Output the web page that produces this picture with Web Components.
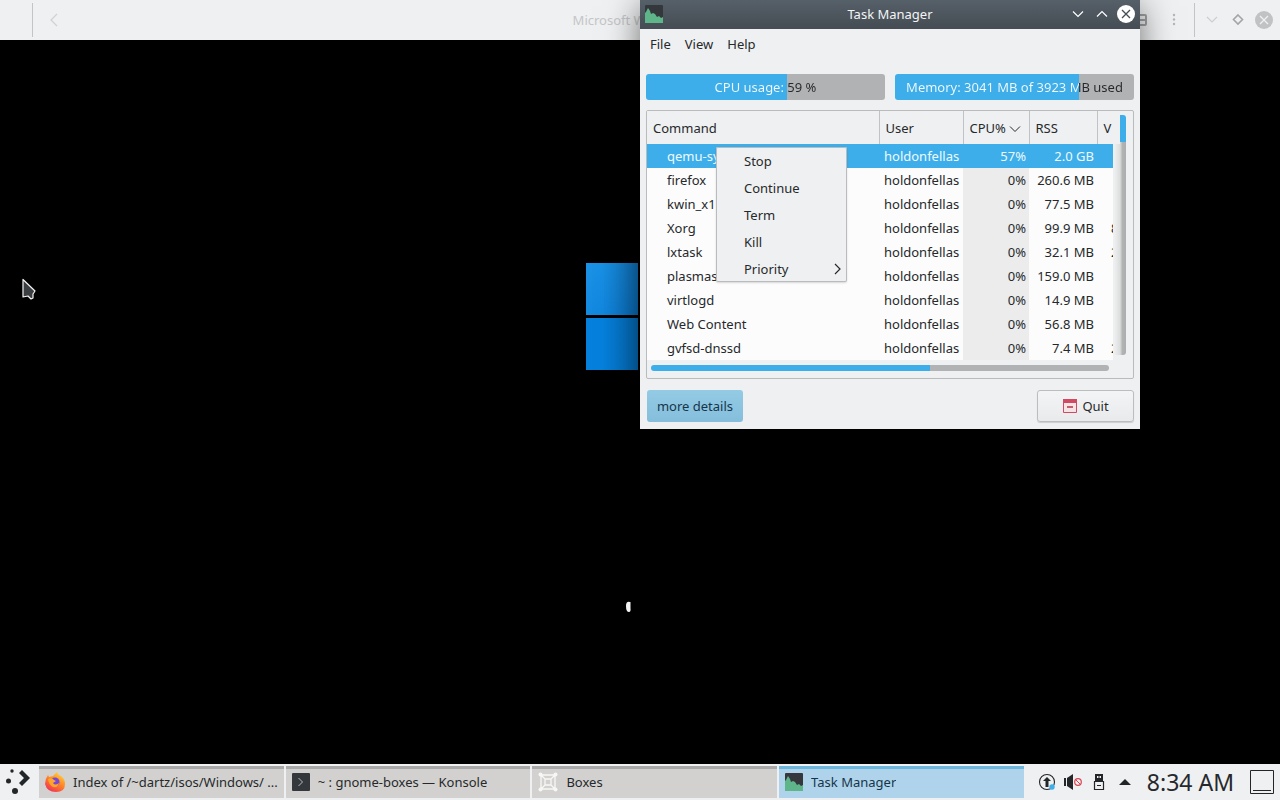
<!DOCTYPE html>
<html lang="en">
<head>
<meta charset="utf-8">
<meta name="viewport" content="width=device-width, initial-scale=1">
<title>Desktop</title>
<style>
  html, body { height: 100%; margin: 0; }
  body { background: #000; color: #26292c; font: 13px/24px "Noto Sans", sans-serif; }
</style>
</head>
<body>
<desk-top>
  <boxes-window slot="windows" heading="Microsoft Windows 11"></boxes-window>
  <task-window slot="windows" heading="Task Manager">
    <usage-meter slot="meters" value="59" label="CPU usage: 59 %"></usage-meter>
    <usage-meter slot="meters" value="77" label="Memory: 3041 MB of 3923 MB used"></usage-meter>
    <process-table></process-table>
    <context-menu slot="popup"></context-menu>
  </task-window>
  <task-bar slot="panel"></task-bar>
</desk-top>

<script>
const define = (name, html, setup) => {
  const tpl = document.createElement('template');
  tpl.innerHTML = '<style>*{box-sizing:border-box}button{font:inherit;color:inherit;border:0;background:none;margin:0;padding:0}svg{display:block;flex:none}</style>' + html;
  customElements.define(name, class extends HTMLElement {
    constructor() {
      super();
      this.attachShadow({ mode: 'open' }).append(tpl.content.cloneNode(true));
    }
    connectedCallback() { if (setup) setup(this, this.shadowRoot); }
  });
};

const monitorIcon = `<svg width="18" height="18" viewBox="0 0 18 18" aria-hidden="true">
  <rect width="18" height="18" rx="1" fill="#34383c"/>
  <path d="M0 18V8l1-1 2-4 2 3 1 3 2-1 2 1 2 3 2-1 2 2 2-1v6z" fill="#5fb58a"/></svg>`;

define('desk-top', `
<style>
  :host { display: grid; grid-template-rows: 1fr 36px; min-height: 100vh; background: #000; }
  main { position: relative; display: grid; overflow: hidden; }
</style>
<main><slot name="windows"></slot></main>
<slot name="panel"></slot>`);

define('boxes-window', `
<style>
  :host { display: grid; grid-template-rows: 40px 1fr; }
  header { display: grid; grid-template-columns: 1fr auto 1fr; align-items: center; background: #eff0f1; color: #c3c6c8; }
  .side { display: flex; align-items: center; height: 40px; }
  .start { padding-left: 32px; gap: 14px; }
  .end { justify-content: flex-end; gap: 8px; padding-right: 7px; }
  .rule { width: 1px; height: 34px; background: #c2c4c6; }
  h1 { margin: 0; font-size: 13px; font-weight: 400; }
  .screen { position: relative; background: #000; }
  .logo { position: absolute; left: calc(50% - 54px); top: 223px; }
  .spin { position: absolute; left: calc(50% - 16px); top: 561px; }
  .pointer { position: absolute; left: 21px; top: 238px; }
</style>
<header>
  <div class="side start">
    <span class="rule"></span>
    <button aria-label="Back"><svg width="14" height="16" viewBox="0 0 14 16" fill="none" stroke="#cfd1d3" stroke-width="1.2"><path d="M10 2 4 8l6 6"/></svg></button>
  </div>
  <h1></h1>
  <div class="side end">
    <button aria-label="Display"><svg width="14" height="14" viewBox="0 0 14 14" fill="none" stroke="#a0a2a4" stroke-width="2"><rect x="1" y="2" width="9" height="10" rx="1"/><path d="M3 7h6"/></svg></button>
    <button aria-label="Menu"><svg width="28" height="14" viewBox="0 0 28 14" fill="#b4b6b8"><circle cx="16" cy="2" r="1.2"/><circle cx="16" cy="6.500" r="1.2"/><circle cx="16" cy="11" r="1.2"/></svg></button>
    <span class="rule"></span>
    <button aria-label="Minimize"><svg width="18" height="18" viewBox="0 0 18 18" fill="none" stroke="#cccecf" stroke-width="1.2"><path d="m4 6 5 5 5-5"/></svg></button>
    <button aria-label="Restore"><svg width="18" height="18" viewBox="0 0 18 18" fill="none" stroke="#a3a6a8" stroke-width="1.6"><path d="m9 4 4.500 4.500L9 13 4.500 8.500z"/></svg></button>
    <button aria-label="Close"><svg width="18" height="18" viewBox="0 0 18 18"><circle cx="9" cy="9" r="9" fill="#c0c2c3"/><path d="m5 5 8 8m0-8-8 8" stroke="#eff0f1" stroke-width="1.3"/></svg></button>
  </div>
</header>
<div class="screen">
  <svg class="logo" width="108" height="108" viewBox="0 0 108 108" aria-hidden="true">
    <defs>
      <linearGradient id="a" x1="0" y1="0" x2="1" y2="1"><stop offset="0" stop-color="#1b93e6"/><stop offset="1" stop-color="#0c80da"/></linearGradient>
      <linearGradient id="b"><stop offset=".3" stop-color="#00101c" stop-opacity="0"/><stop offset="1" stop-color="#00101c" stop-opacity=".2"/></linearGradient>
    </defs>
    <g fill="url(#a)"><rect y="0" width="52" height="52"/><rect y="55" width="52" height="52" fill="#0580dc"/><rect x="55" width="52" height="52"/><rect x="55" y="55" width="52" height="52"/></g>
    <g fill="url(#b)"><rect width="52" height="52"/><rect y="55" width="52" height="52"/></g>
  </svg>
  <svg class="spin" width="8" height="12" viewBox="0 0 8 12" aria-hidden="true"><path d="M6 1Q2 0 2 5q0 6 3 6 2 0 1.500-4V1z" fill="#f4f4f4"/></svg>
  <svg class="pointer" width="16" height="24" viewBox="0 0 16 24" aria-hidden="true"><path d="M2 1.500V19l5-1 3 3 2-1v-4l2-3z" fill="#3c3f42" stroke="#f4f4f4" stroke-width="1.200" stroke-linejoin="round"/></svg>
</div>`, (el, root) => { root.querySelector('h1').textContent = el.getAttribute('heading'); });

define('task-window', `
<style>
  :host { position: absolute; left: 50%; top: 0; width: min(500px, 100%); display: flex; flex-direction: column; background: #eff0f1; box-shadow: 0 6px 32px rgba(0,0,0,.55); }
  header { display: grid; grid-template-columns: 1fr auto 1fr; align-items: center; height: 29px; padding: 0 5px 1px; background: linear-gradient(#566069, #454c53); color: #f3f4f5; }
  h2 { margin: 0; font-size: 13px; font-weight: 400; }
  .controls { display: flex; justify-content: flex-end; align-items: center; gap: 6px; }
  nav { display: flex; height: 30px; padding: 0 3px; }
  nav button { padding: 0 7px; }
  .body { display: flex; flex-direction: column; gap: 10px; padding: 15px 6px 7px; }
  .meters { display: flex; gap: 10px; }
  footer { display: flex; justify-content: space-between; padding: 1px 0 0 1px; }
  footer button { height: 32px; border-radius: 3px; display: flex; align-items: center; justify-content: center; gap: 4px; }
  .more { width: 96px; background: linear-gradient(#93cbe5, #85bedb); color: #17354a; }
  .quit { width: 97px; border: 1px solid #bbbdbf; background: linear-gradient(#f3f4f5, #e9eaeb); box-shadow: 0 1px 1px rgba(0,0,0,.15); }
</style>
<header>
  <span>${monitorIcon}</span>
  <h2></h2>
  <div class="controls">
    <button aria-label="Minimize"><svg width="18" height="18" viewBox="0 0 18 18" fill="none" stroke="#fff" stroke-width="1.2"><path d="m4 6.500 5 5 5-5"/></svg></button>
    <button aria-label="Maximize"><svg width="18" height="18" viewBox="0 0 18 18" fill="none" stroke="#fff" stroke-width="1.2"><path d="m4 11.500 5-5 5 5"/></svg></button>
    <button aria-label="Close"><svg width="18" height="18" viewBox="0 0 18 18"><circle cx="9" cy="9" r="9" fill="#fff"/><path d="m5 5 8 8m0-8-8 8" stroke="#454c53" stroke-width="1.3"/></svg></button>
  </div>
</header>
<nav aria-label="Menu bar"><button>File</button><button>View</button><button>Help</button></nav>
<div class="body">
  <div class="meters"><slot name="meters"></slot></div>
  <slot></slot>
  <footer>
    <button class="more">more details</button>
    <button class="quit"><svg width="16" height="16" viewBox="0 0 16 16" aria-hidden="true"><path d="M1.500 1.500h13v13h-13z" fill="#f6e3e6" stroke="#cf4a62"/><path d="M1 1h14v4H1z" fill="#cf4a62"/><path d="M5 9h6" stroke="#b5304a" stroke-width="1.500"/></svg>Quit</button>
  </footer>
</div>
<slot name="popup"></slot>`, (el, root) => { root.querySelector('h2').textContent = el.getAttribute('heading'); });

define('usage-meter', `
<style>
  :host { flex: 1; display: block; height: 26px; border-radius: 3px; overflow: hidden;
    background: linear-gradient(to right, #3daee9 var(--value), #b1b2b3 var(--value)); }
  span { display: block; text-align: center; line-height: 26px; white-space: nowrap; color: transparent;
    background: linear-gradient(to right, #f4fafd var(--value), #26292c var(--value)); -webkit-background-clip: text; background-clip: text; }
</style>
<span role="meter" aria-valuemin="0" aria-valuemax="100"></span>`, (el, root) => {
  const value = el.getAttribute('value'), span = root.querySelector('span');
  el.style.setProperty('--value', value + '%');
  span.setAttribute('aria-valuenow', value);
  span.setAttribute('aria-label', el.getAttribute('label'));
  span.textContent = el.getAttribute('label');
});

define('process-table', `
<style>
  :host { display: grid; grid-template-columns: 1fr 20px; grid-template-rows: 249px 18px; border: 1px solid #b9bbbd; border-radius: 2px; }
  .view { overflow: hidden; }
  table { width: 100%; table-layout: fixed; border-collapse: collapse; background: #fcfcfc; }
  tr { height: 24px; }
  thead tr { height: 33px; background: #eff0f1; }
  th, td { padding: 0; font-weight: 400; white-space: nowrap; overflow: hidden; text-align: left; line-height: 24px; }
  th { padding-left: 6px; border-left: 1px solid #c0c2c4; }
  th:first-child { border-left: 0; }
  th svg { display: inline-block; vertical-align: middle; margin-left: 3px; }
  .user { width: 84px; } .cpu { width: 66px; } .rss { width: 68px; } .vm { width: 16px; }
  td:nth-child(1) { padding-left: 20px; }
  td:nth-child(2) { padding-left: 5px; }
  td:nth-child(3) { padding-right: 3px; text-align: right; background: #ececec; }
  td:nth-child(4) { padding-right: 3px; text-align: right; }
  td:nth-child(5) { padding-left: 14px; text-overflow: clip; }
  tr.selected td { background: #3daee9; color: #eefaff; }
  .vbar { margin: 4px 7px 5px 1px; border-radius: 3px; background: linear-gradient(#3daee9, #3daee9) right top / 6px 27px no-repeat, linear-gradient(to right, #eff0f1, #dcdddd 50%, #b1b2b3 70%, #acadae); }
  .hbar { margin: 5px 4px 7px; border-radius: 3px; background: linear-gradient(to right, #3daee9 61%, #b1b2b3 61%); }
  .vbar::before { content: ""; display: block; width: 6px; height: 29px; background: #eff0f1; }
</style>
<div class="view"><table>
  <thead><tr><th scope="col">Command</th><th scope="col" class="user">User</th><th scope="col" class="cpu">CPU%<svg width="12" height="12" viewBox="0 0 12 12" fill="none" stroke="#26292c" aria-hidden="true"><path d="m1 3.500 5 5 5-5"/></svg></th><th scope="col" class="rss">RSS</th><th scope="col" class="vm">V</th></tr></thead>
  <tbody></tbody>
</table></div>
<div class="vbar"></div>
<div class="hbar"></div>`, (el, root) => {
  const rows = [
    ['qemu-sys', '57%', '2.0 GB', ''],
    ['firefox', '0%', '260.6 MB', ''],
    ['kwin_x11', '0%', '77.5 MB', ''],
    ['Xorg', '0%', '99.9 MB', '8'],
    ['lxtask', '0%', '32.1 MB', '2'],
    ['plasmas', '0%', '159.0 MB', ''],
    ['virtlogd', '0%', '14.9 MB', ''],
    ['Web Content', '0%', '56.8 MB', ''],
    ['gvfsd-dnssd', '0%', '7.4 MB', '2']
  ];
  root.querySelector('tbody').innerHTML = rows.map(([name, cpu, rss, vm], i) =>
    `<tr${i ? '' : ' class="selected"'}><td>${name}</td><td>holdonfellas</td><td>${cpu}</td><td>${rss}</td><td>${vm}</td></tr>`).join('');
});

define('context-menu', `
<style>
  :host { position: absolute; left: 76px; top: 147px; width: 131px; display: flex; flex-direction: column; background: #eff0f1; border-radius: 2px; box-shadow: inset 0 0 0 1px #b9bbbd, 0 1px 2px rgba(0,0,0,.15); }
  button { display: flex; align-items: center; justify-content: space-between; height: 27px; padding: 0 4px 0 28px; }
</style>
<button>Stop</button><button>Continue</button><button>Term</button><button>Kill</button>
<button aria-haspopup="true">Priority<svg width="10" height="12" viewBox="0 0 10 12" fill="none" stroke="#26292c" stroke-width="1.2" aria-hidden="true"><path d="m2 1 5 5-5 5"/></svg></button>`);

define('task-bar', `
<style>
  :host { display: flex; align-items: center; background: #eff0f1; }
  .launcher { width: 39px; padding-left: 4px; }
  .tasks { flex: 1; display: grid; grid-template-columns: repeat(4, 1fr); gap: 2px; }
  .task { display: flex; align-items: center; gap: 8px; height: 32px; min-width: 0; padding: 0 4px 0 6px; box-shadow: inset 0 3px #a9a9a9; background: #d2d1cf; }
  .task span { overflow: hidden; text-overflow: ellipsis; white-space: nowrap; }
  .task.active { box-shadow: inset 0 3px #6cb8dc; background: #aed3ea; color: #17354a; }
  .tray { display: flex; align-items: center; gap: 8px; padding: 0 6px 0 14px; }
  time { font-size: 23px; line-height: 32px; padding: 0 8px 0 5px; white-space: nowrap; }
</style>
<button class="launcher" aria-label="Application launcher"><svg width="28" height="28" viewBox="0 0 28 28" fill="#232629"><circle cx="8" cy="3" r="1.700"/><circle cx="4.500" cy="13" r="2.500"/><circle cx="11" cy="23" r="3"/><path d="m15 5 3-3 8 8-8 8-3-3 5-5z"/></svg></button>
<div class="tasks">
  <button class="task"><svg width="20" height="20" viewBox="0 0 20 20"><defs><linearGradient id="f" x1=".8" y1="0" x2=".2" y2="1"><stop offset="0" stop-color="#ffd83a"/><stop offset=".5" stop-color="#ff8026"/><stop offset="1" stop-color="#ef2b5d"/></linearGradient></defs><path d="M3 3l1 2 4-1 4-4q1 3 4 4 4 3 4 8 0 8-9 8T0 12Q0 7 3 3z" fill="url(#f)"/><circle cx="10" cy="10" r="4.500" fill="#7549d4"/><path d="M3 7q4-2 6 1l2 1-3 2q2 3 6 0-1 5-6 4-4-2-5-8z" fill="#ffa52c"/></svg><span>Index of /~dartz/isos/Windows/ ...</span></button>
  <button class="task"><svg width="18" height="18" viewBox="0 0 18 18"><rect width="18" height="18" rx="1" fill="#34383c"/><path d="m6.500 5 4 4-4 4" fill="none" stroke="#b8bbbd"/></svg><span>~ : gnome-boxes — Konsole</span></button>
  <button class="task"><svg width="20" height="20" viewBox="0 0 20 20" fill="none" stroke="#f7f7f5" stroke-width="1.300"><path d="M3 3h14v14H3zM7 7h6v6H7zM3 3l4 4m10-4-4 4M3 17l4-4m10 4-4-4"/><g fill="#f7f7f5" stroke="none"><circle cx="2.500" cy="2.500" r="2"/><circle cx="17.500" cy="2.500" r="2"/><circle cx="2.500" cy="17.500" r="2"/><circle cx="17.500" cy="17.500" r="2"/></g></svg><span>Boxes</span></button>
  <button class="task active">${monitorIcon}<span>Task Manager</span></button>
</div>
<div class="tray">
  <button aria-label="Updates"><svg width="18" height="18" viewBox="0 0 18 18"><circle cx="9" cy="9" r="7.500" fill="none" stroke="#232629" stroke-width="1.100"/><path d="m9 4 4 4h-2.500v6h-3V8H5z" fill="#232629"/><circle cx="14" cy="14" r="2.700" fill="#3daee9"/></svg></button>
  <button aria-label="Volume muted"><svg width="18" height="18" viewBox="0 0 18 18"><path d="M0 5h2v8H0zM3 5l6-4v16l-6-4z" fill="#232629"/><circle cx="14" cy="9" r="3.300" fill="none" stroke="#da4453" stroke-width="1.200"/><path d="m12 7 4 4" stroke="#da4453"/></svg></button>
  <button aria-label="Removable devices"><svg width="18" height="18" viewBox="0 0 18 18"><path d="M5 1h8v7H5z" fill="#232629"/><path d="M7 3h1.500v2H7zm2.500 0H11v2H9.500z" fill="#eff0f1"/><path d="M4.500 8.500h9v8h-9z" fill="none" stroke="#232629" stroke-width="1.200"/><path d="M7 12.500h4" stroke="#232629"/></svg></button>
  <button aria-label="Show hidden icons"><svg width="18" height="18" viewBox="0 0 18 18"><path d="m3 12 6-6 6 6z" fill="#232629"/></svg></button>
  <time datetime="08:34">8:34 AM</time>
  <button aria-label="Show desktop"><svg width="24" height="24" viewBox="0 0 24 24" fill="none" stroke="#232629"><path d="M.5.5h23v23H.5zM3 20.500h18"/></svg></button>
</div>`);
</script>
</body>
</html>
